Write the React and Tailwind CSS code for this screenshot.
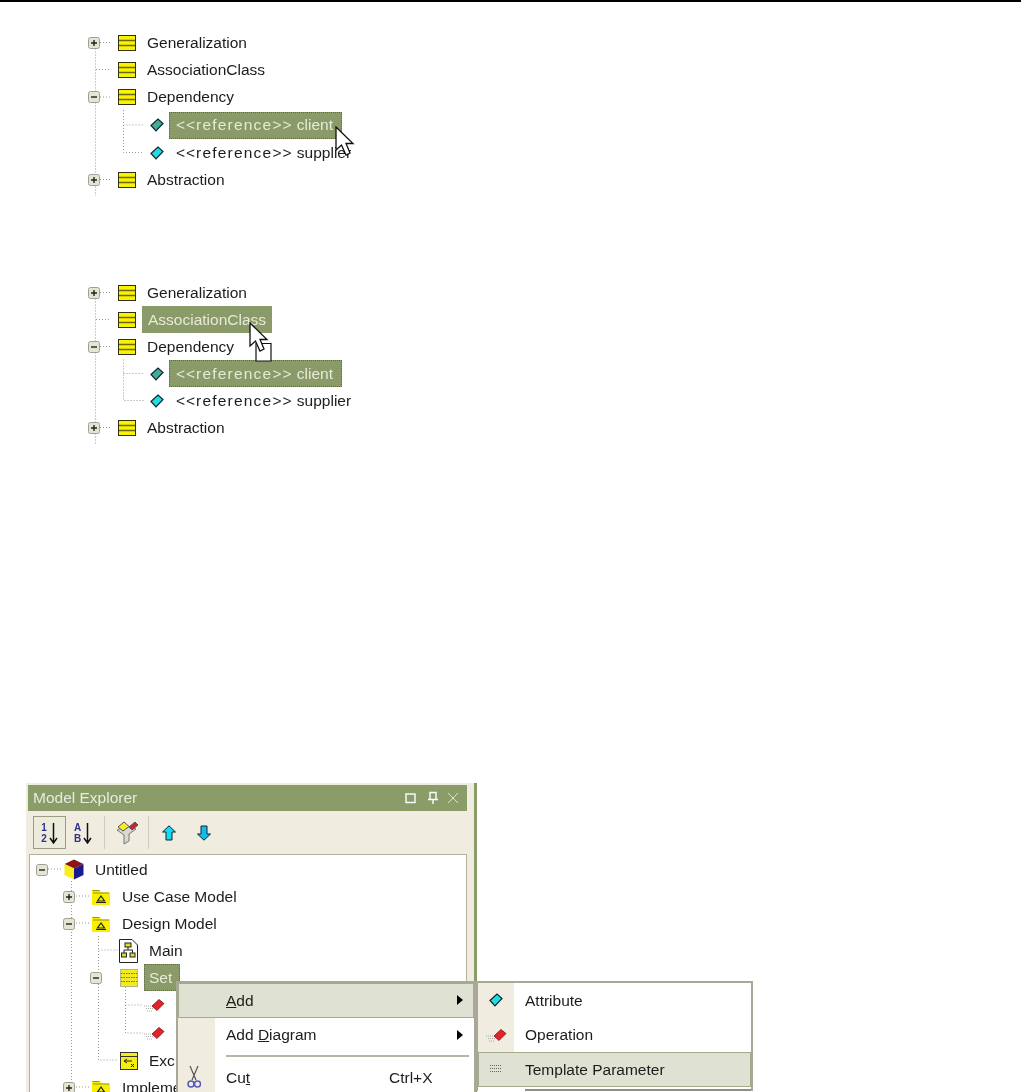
import React from "react";

const FONT = "font-['Liberation_Sans',Arial,sans-serif]";
const DOT = { stroke: "#9a9a90", strokeWidth: 1, strokeDasharray: "1 2", fill: "none" };

function Expander({ open }) {
  return (
    <svg width="12" height="12" viewBox="0 0 12 12" className="block shrink-0">
      <rect x="0.5" y="0.5" width="11" height="11" rx="2" fill="#e6e4d4" stroke="#a0a090" />
      <path d={open ? "M3 6h6" : "M3 6h6M6 3v6"} stroke="#222" strokeWidth="1.4" />
    </svg>
  );
}

function ClassIcon() {
  return (
    <svg width="18" height="16" viewBox="0 0 18 16" className="block shrink-0">
      <rect x="0.5" y="0.5" width="17" height="15" fill="#f9f200" stroke="#33300a" />
      <path d="M1 5.5h16M1 10.5h16" stroke="#6b6a10" strokeWidth="1.4" />
    </svg>
  );
}

function Diamond({ fill = "#22dde0", dark = "#123" }) {
  return (
    <svg width="14" height="14" viewBox="0 0 14 14" className="block shrink-0">
      <path d="M1 7.500L8 1L13 5.500L6 12.800Z" fill={fill} stroke={dark} strokeWidth="1.200" />
    </svg>
  );
}

function Operation({ w = 22 }) {
  return (
    <svg width={w} height="14" viewBox="0 0 22 14" className="block shrink-0">
      <path d="M1 8h7M3 10.500h7M4 13h6" stroke="#a8a8a0" strokeDasharray="1 1" />
      <path d="M9 8L16 1.500L21 5.500L14 12.500Z" fill="#e3222a" stroke="#7a1015" strokeWidth="0.800" />
    </svg>
  );
}

function Folder() {
  return (
    <svg width="18" height="16" viewBox="0 0 18 16" className="block shrink-0">
      <path d="M0 16V1h7.500l2 2.500H18V16Z" fill="#f8f000" />
      <path d="M0.500 1.500h7M1 4h16" stroke="#99940a" />
      <path d="M9 7L12.500 12H5.500Z" fill="none" stroke="#222" strokeWidth="1.200" />
      <path d="M4 13.500h10" stroke="#222" />
    </svg>
  );
}

function Cube() {
  return (
    <svg width="20" height="21" viewBox="0 0 20 21" className="block shrink-0">
      <path d="M10 0.500L19.500 5L10 9.500L0.500 5Z" fill="#8e1414" />
      <path d="M0.500 5L10 9.500V20.500L0.500 16Z" fill="#f6ee20" />
      <path d="M19.500 5L10 9.500V20.500L19.500 16Z" fill="#1a1a90" />
    </svg>
  );
}

function DiagramIcon() {
  return (
    <svg width="19" height="24" viewBox="0 0 19 24" className="block shrink-0">
      <path d="M0.500 0.500H13L18.500 6V23.500H0.500Z" fill="#fff" stroke="#222" />
      <rect x="6" y="4" width="6" height="4" fill="#e8d820" stroke="#222" />
      <rect x="2.500" y="14" width="5" height="4" fill="#e8d820" stroke="#222" />
      <rect x="11" y="14" width="5" height="4" fill="#e8d820" stroke="#222" />
      <path d="M9 8v3M5 14v-3h8.500v3" stroke="#222" fill="none" />
    </svg>
  );
}

function SetIcon() {
  return (
    <svg width="18" height="18" viewBox="0 0 18 18" className="block shrink-0">
      <rect x="0.500" y="0.500" width="17" height="17" fill="#f2ea20" stroke="#777" strokeDasharray="1 1" />
      <path d="M1 4.500h16M1 8.500h16M1 12.500h16" stroke="#7a7620" strokeDasharray="1.500 1" />
    </svg>
  );
}

function ExcIcon() {
  return (
    <svg width="18" height="18" viewBox="0 0 18 18" className="block shrink-0">
      <rect x="0.500" y="0.500" width="17" height="17" fill="#f6ee10" stroke="#333" />
      <path d="M1 4.500h16" stroke="#333" />
      <path d="M4 9h8M4 9l3-2M4 9l3 2M11 12l3 3M14 12l-3 3" stroke="#222" fill="none" />
    </svg>
  );
}

function Row({ pad, h = 27, children }) {
  return (
    <div className="flex items-center" style={{ paddingLeft: pad, height: h }}>
      {children}
    </div>
  );
}

function Exp({ open, w }) {
  return (
    <span className="shrink-0 flex items-center" style={{ width: w }}>
      <Expander open={open} />
    </span>
  );
}

function Sel({ focus, className, children }) {
  return (
    <span
      className={`h-[27px] flex items-center px-[6px] bg-[#8a9a68] text-[#e6ead8] ${
        focus ? "outline-1 outline-dotted outline-[#5f6b48] -outline-offset-1" : ""
      } ${className || ""}`}
    >
      {children}
    </span>
  );
}

function Stereotype({ name }) {
  return (
    <span className="whitespace-pre">
      <span className="tracking-[1px]">&lt;&lt;</span>
      <span className="tracking-[1.200px]">reference</span>
      <span className="tracking-[1px]">&gt;&gt;</span> {name}
    </span>
  );
}

function Cursor({ className, drag }) {
  const arrow = "M1 1V24L6.500 19L11 29L15 27L11 17.500H18Z";
  return (
    <svg width="24" height="40" viewBox="0 0 24 40" className={`absolute ${className}`}>
      {drag && <path d="M7 21.500H22V39H7Z" fill="#fff" stroke="#111" strokeWidth="1.200" />}
      <path d={arrow} fill="#fff" stroke="#111" strokeWidth="1.300" />
    </svg>
  );
}

function ClassTree({ selectAssoc, heights }) {
  const c = [];
  let y = 0;
  heights.forEach((h) => {
    c.push(y + h / 2);
    y += h;
  });
  const d = `M7.500 ${c[0] + 6}V${y + 3}M12 ${c[0]}h10M8 ${c[1]}h14M12 ${c[2]}h10M35.500 ${c[2] + 13}V${c[4]}H56M35.500 ${c[3]}H56M12 ${c[5]}h10`;
  return (
    <section className="relative ml-[88px] w-[280px]">
      <svg width="80" height={y + 4} className="absolute left-0 top-0">
        <path d={d} {...DOT} />
      </svg>
      <div className="relative">
        <Row pad={0} h={heights[0]}>
          <Exp w={30} />
          <ClassIcon />
          <span className="ml-[11px]">Generalization</span>
        </Row>
        <Row pad={30} h={heights[1]}>
          <ClassIcon />
          {selectAssoc ? <Sel className="ml-[6px]">AssociationClass</Sel> : <span className="ml-[11px]">AssociationClass</span>}
        </Row>
        <Row pad={0} h={heights[2]}>
          <Exp open w={30} />
          <ClassIcon />
          <span className="ml-[11px]">Dependency</span>
        </Row>
        <Row pad={62} h={heights[3]}>
          <Diamond fill="#3fae94" />
          <Sel focus className="ml-[5px] !px-[7px] w-[173px]"><Stereotype name="client" /></Sel>
        </Row>
        <Row pad={62} h={heights[4]}>
          <Diamond />
          <span className="ml-[12px]"><Stereotype name="supplier" /></span>
        </Row>
        <Row pad={0} h={heights[5]}>
          <Exp w={30} />
          <ClassIcon />
          <span className="ml-[11px]">Abstraction</span>
        </Row>
      </div>
    </section>
  );
}

function SortIcon({ top, bottom }) {
  return (
    <span className="relative flex items-center gap-[2px] h-[24px]">
      <span className="flex flex-col text-[10px] leading-[11px] font-bold text-[#31318a]">
        <span>{top}</span>
        <span>{bottom}</span>
      </span>
      <svg width="9" height="22" viewBox="0 0 9 22" className="block">
        <path d="M4.500 1V20M1 16l3.500 5L8 16" stroke="#111" strokeWidth="1.500" fill="none" />
      </svg>
    </span>
  );
}

function Toolbar() {
  return (
    <div className="h-[43px] flex items-center pl-[5px] bg-[#f0ede0]">
      <div className="w-[33px] h-[33px] border border-[#9a9c84] bg-[#ecebdc] flex items-center justify-center">
        <SortIcon top="1" bottom="2" />
      </div>
      <div className="w-[34px] flex justify-center"><SortIcon top="A" bottom="B" /></div>
      <div className="w-px h-[33px] ml-[4px] bg-[#cfccb8]" />
      <div className="w-[43px] flex justify-center">
        <svg width="22" height="24" viewBox="0 0 22 24" className="block">
          <path d="M1 9L8 14V23L13 20V13L20 8L11 5Z" fill="#d8d8d0" stroke="#777" />
          <path d="M2 6L8 1L13 5.500L7 10Z" fill="#f6ee20" stroke="#555" />
          <path d="M13 6L19 1L22 4L16 9Z" fill="#c8242a" stroke="#555" />
        </svg>
      </div>
      <div className="w-px h-[33px] bg-[#cfccb8]" />
      <div className="w-[40px] flex justify-center pt-[1px]">
        <svg width="14" height="16" viewBox="0 0 14 16" className="block">
          <path d="M7 0.800L13.500 7H10V15H4V7H0.500Z" fill="#14dcf0" stroke="#123" />
        </svg>
      </div>
      <div className="w-[29px] flex justify-center pt-[1px]">
        <svg width="14" height="16" viewBox="0 0 14 16" className="block">
          <path d="M7 15.200L13.500 9H10V1H4V9H0.500Z" fill="#14bcea" stroke="#123" />
        </svg>
      </div>
    </div>
  );
}

function MenuItem({ icon, label, shortcut, arrow, active, gutter = 37 }) {
  return (
    <div
      className={`flex items-center h-[34.500px] relative ${
        active ? "bg-[#dfe2d3] outline outline-1 outline-[#a3ab8a] -outline-offset-1" : ""
      }`}
    >
      <span
        className={`h-full flex items-center justify-center shrink-0 ${active ? "" : "bg-[#f0ede0]"}`}
        style={{ width: gutter }}
      >
        {icon}
      </span>
      <span className="ml-[11px]">{label}</span>
      {shortcut && <span className="absolute left-[211px]">{shortcut}</span>}
      {arrow && <span className="absolute right-[11px] w-0 h-0 border-y-[5px] border-y-transparent border-l-[6px] border-l-black" />}
    </div>
  );
}

function Scissors() {
  return (
    <svg width="14" height="24" viewBox="0 0 14 24" className="block mr-[5px]">
      <path d="M3 1L9 15M11 1L5 15" stroke="#555" strokeWidth="1.200" />
      <circle cx="4" cy="19" r="3" fill="none" stroke="#5558b8" strokeWidth="1.500" />
      <circle cx="10.500" cy="19" r="3" fill="none" stroke="#5558b8" strokeWidth="1.500" />
    </svg>
  );
}

function Panel() {
  return (
    <section className="relative ml-[26px] w-[451px] h-[310px] bg-[#f0ede0] border-r-[3px] border-r-[#8a9c68] pt-[2px] pl-[2px] pr-[7px]">
      <div className="h-[26px] bg-[#8a9c68] text-[#e8ecdc] flex items-center pl-[5px] pr-[8px]">
        <span className="flex-1">Model Explorer</span>
        <svg width="54" height="14" viewBox="0 0 54 14" className="block">
          <rect x="1" y="3" width="9" height="8.500" fill="none" stroke="#fff" strokeWidth="1.400" />
          <path d="M25 1.500h6v7h-6ZM23 8.500h10M28 9v4" stroke="#fff" strokeWidth="1.400" fill="none" />
          <path d="M43 2L53 12M53 2L43 12" stroke="#dfe3d0" />
        </svg>
      </div>
      <Toolbar />
      <div className="relative h-[240px] bg-white border border-[#b4b09c] border-b-0 ml-[1px] pt-[1px]">
        <svg width="120" height="238" className="absolute left-0 top-0">
          <path d="M41.500 26V236M18 14h14M46 41h14M46 68h14M68.500 81V205H88M68.500 95H88M95.500 132V178H113M95.500 150H113M46 232h14" {...DOT} />
        </svg>
        <div className="relative">
          <Row pad={6}>
            <Exp open w={28} />
            <Cube />
            <span className="ml-[11px]">Untitled</span>
          </Row>
          <Row pad={33}>
            <Exp w={29} />
            <Folder />
            <span className="ml-[12px]">Use Case Model</span>
          </Row>
          <Row pad={33}>
            <Exp open w={29} />
            <Folder />
            <span className="ml-[12px]">Design Model</span>
          </Row>
          <Row pad={89}>
            <DiagramIcon />
            <span className="ml-[11px]">Main</span>
          </Row>
          <Row pad={60}>
            <Exp open w={30} />
            <SetIcon />
            <Sel focus className="ml-[6px] w-[36px] !px-[5px]">Set</Sel>
          </Row>
          <Row pad={113} h={28}><Operation /></Row>
          <Row pad={113} h={28}><Operation /></Row>
          <Row pad={90}>
            <ExcIcon />
            <span className="ml-[11px]">Exc</span>
          </Row>
          <Row pad={33}>
            <Exp w={29} />
            <Folder />
            <span className="ml-[12px] w-[55px] overflow-hidden whitespace-nowrap">Impleme</span>
          </Row>
        </div>
      </div>

      <div className="absolute left-[150px] top-[198px] w-[300px] h-[120px] bg-white border-2 border-[#a8a898] border-b-0 overflow-hidden">
        <MenuItem active label={<><u>A</u>dd</>} arrow />
        <MenuItem label={<>Add <u>D</u>iagram</>} arrow />
        <div className="flex h-[8px]">
          <span className="w-[37px] bg-[#f0ede0]" />
          <span className="ml-[11px] mr-[5px] flex-1 h-[2px] mt-[3px] bg-[#b4b4a8]" />
        </div>
        <MenuItem icon={<Scissors />} label={<>Cu<u>t</u></>} shortcut="Ctrl+X" />
      </div>

      <div className="absolute left-[450px] top-[198px] w-[277px] h-[110px] bg-white border-2 border-[#a8a898] border-b-0 overflow-hidden">
        <MenuItem icon={<Diamond />} label="Attribute" gutter={36} />
        <MenuItem icon={<Operation />} label="Operation" gutter={36} />
        <MenuItem
          active
          gutter={36}
          icon={
            <svg width="14" height="10" viewBox="0 0 14 10" className="block">
              <path d="M1 1.500h12M1 4.500h12M1 7.500h12" stroke="#666" strokeDasharray="1 1" />
            </svg>
          }
          label="Template Parameter"
        />
        <div className="ml-[47px] mt-[2px] h-[2px] bg-[#8f8f85]" />
      </div>
    </section>
  );
}

export default function App() {
  return (
    <div className={`relative h-[1092px] overflow-hidden bg-white text-[#1c1c1c] text-[15.500px] leading-none blur-[0.4px] ${FONT}`}>
      <div className="h-[2px] bg-black" />
      <div className="h-[27px]" />
      <div className="relative">
        <ClassTree heights={[27, 27, 28, 28, 27, 27]} />
        <Cursor className="left-[335px] top-[97px]" />
      </div>
      <div className="h-[86px]" />
      <div className="relative">
        <ClassTree selectAssoc heights={[27, 27, 27, 27, 27, 27]} />
        <Cursor drag className="left-[249px] top-[43px]" />
      </div>
      <div className="h-[342px]" />
      <Panel />
    </div>
  );
}
